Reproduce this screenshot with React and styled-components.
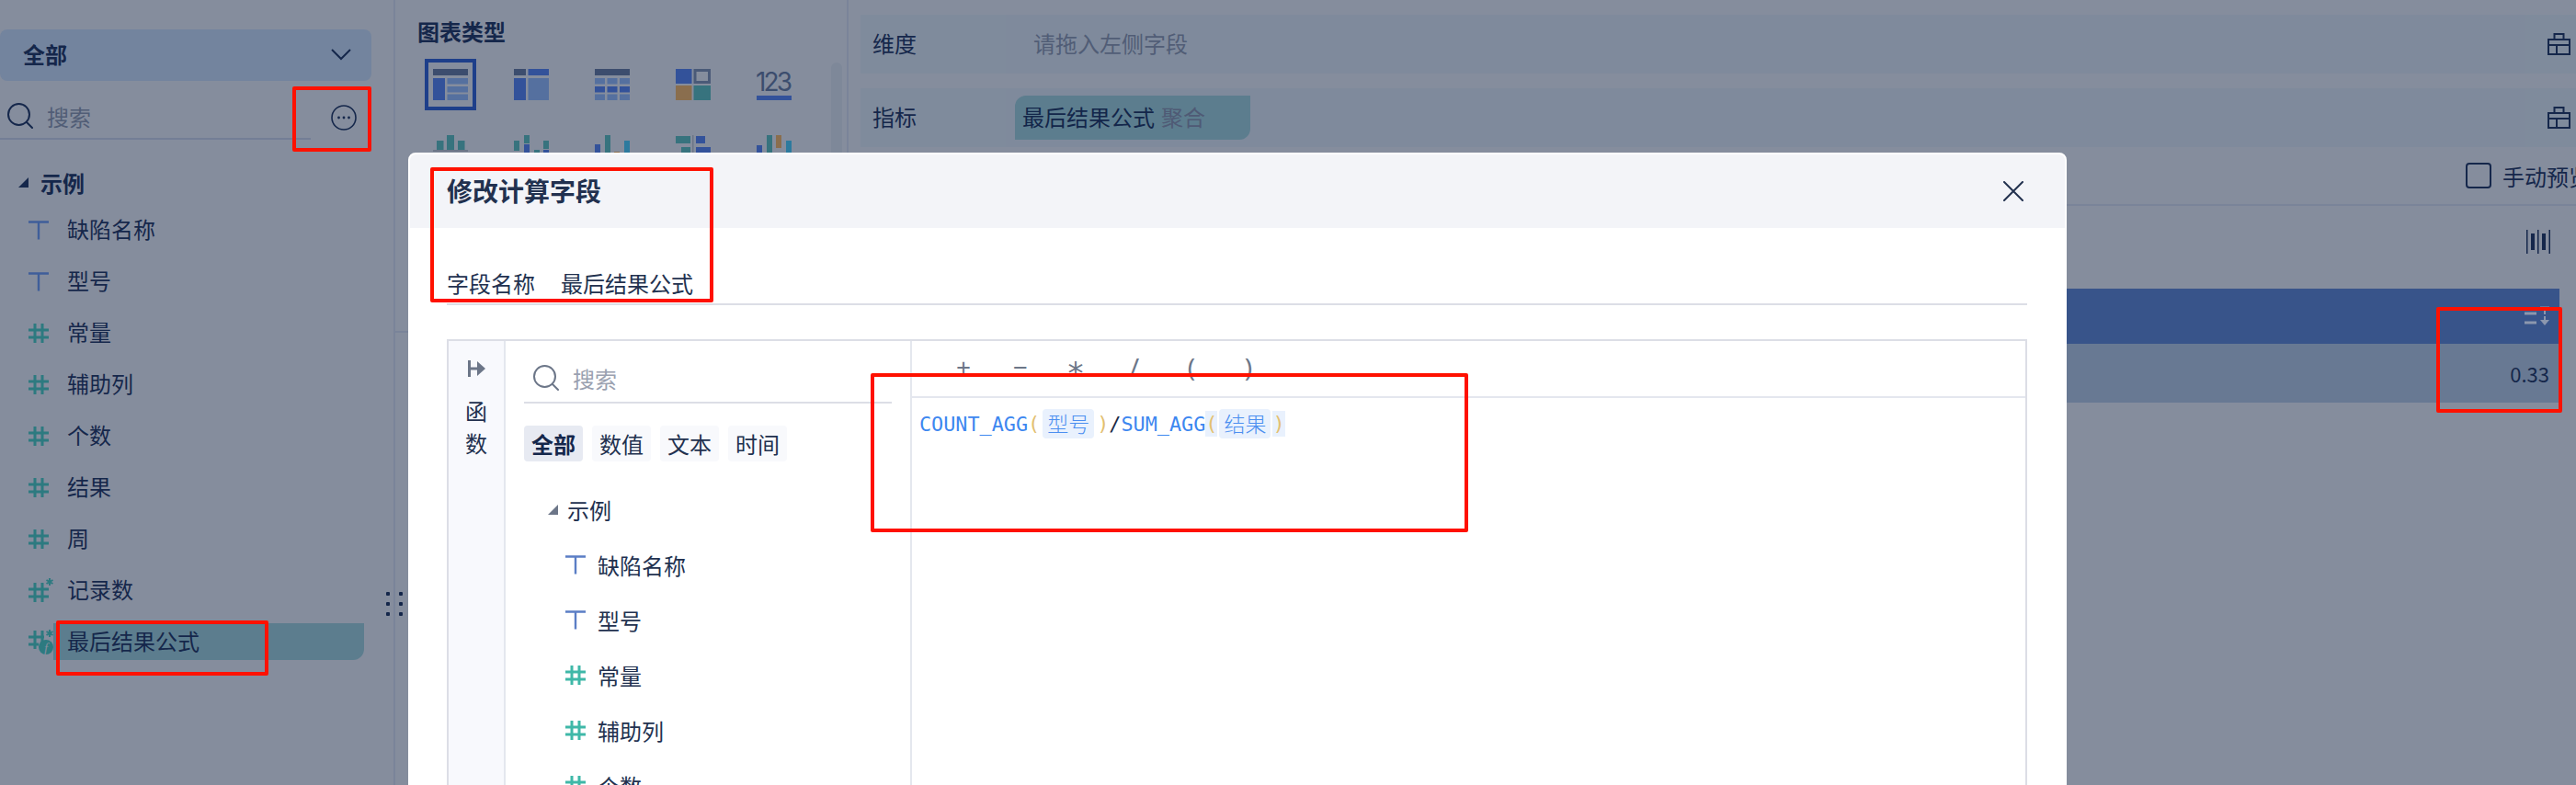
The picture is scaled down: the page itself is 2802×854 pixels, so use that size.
import React from 'react';
import styled, { createGlobalStyle } from 'styled-components';

const Global = createGlobalStyle`
  html, body { margin: 0; padding: 0; background: #858d9d; overflow: hidden; }
  * { box-sizing: border-box; }
  body { font-family: "Noto Sans CJK SC", "Noto Sans", sans-serif; color: #15274b; }
`;

const Page = styled.div`
  position: relative; width: 2802px; height: 854px; overflow: hidden;
  display: flex; background: #858d9d; font-size: 24px;
`;

/* left field panel */
const FieldPanel = styled.aside`
  position: relative; flex: 0 0 430px; height: 100%; padding-top: 32px;
  border-right: 2px solid #7a8499;
`;
const Scope = styled.div`
  width: 404px; height: 56px; background: #73849e; border-radius: 8px;
  display: flex; align-items: center; justify-content: space-between;
  padding: 0 22px 2px 25px; font-weight: 700; line-height: 1;
`;
const SearchRow = styled.div`
  display: flex; align-items: center; width: 404px; height: 64px; padding-top: 8px;
`;
const SearchField = styled.div`
  flex: 0 0 338px; height: 56px; border-bottom: 2px solid #737e96; padding: 6px 0 0 8px;
  display: flex; align-items: center; gap: 15px; color: #515d76;
`;
const MoreSlot = styled.div`
  flex: 1; display: flex; justify-content: flex-end; padding: 0 16px 0 0; margin-top: 8px;
`;
const GroupRow = styled.div`
  display: flex; align-items: center; height: 44px; margin-top: 26px; padding: 0 0 4px 20px;
  gap: 13px; font-weight: 700;
`;
const FieldRow = styled.div`
  display: flex; align-items: center; height: 56px; padding-left: 31px;
`;
const FieldIcon = styled.span`
  flex: 0 0 27px; display: flex; align-items: center;
`;
const FieldName = styled.span`
  flex: 0 0 338px; height: 40px; line-height: 37px; padding-left: 15px;
  border-radius: 0 0 12px 0;
  background: ${p => (p.$active ? '#5c7d8e' : 'transparent')};
`;
const Grip = styled.div`
  position: absolute; left: 420px; top: 644px; width: 18px; height: 26px;
  display: grid; grid-template-columns: 4px 4px; justify-content: space-between; align-content: space-between;
  & > i { width: 4px; height: 4px; background: #15274b; border-radius: 1px; }
`;

/* middle chart panel */
const ChartPanel = styled.section`
  position: relative; flex: 0 0 493px; height: 100%; border-right: 2px solid #7a8499;
`;
const ChartTop = styled.div`
  height: 362px; border-bottom: 2px solid #7a8499; padding: 16px 0 0 24px; overflow: hidden;
`;
const PanelTitle = styled.div`
  font-weight: 700; line-height: 36px; height: 48px;
`;
const ChartGrid = styled.div`
  display: grid; grid-template-columns: repeat(5, 56px); grid-auto-rows: 56px;
  column-gap: 32px; row-gap: 16px; margin-left: 8px;
`;
const ChartCell = styled.div`
  display: flex; align-items: center; justify-content: center;
  border: 4px solid ${p => (p.$active ? '#1e3f8a' : 'transparent')};
`;
const Scroll = styled.div`
  position: absolute; left: 474px; top: 68px; width: 12px; height: 130px;
  border-radius: 6px; background: #7e8899;
`;

/* right config panel */
const ConfigPanel = styled.section`
  flex: 1; min-width: 0; padding: 16px 0 0 13px; overflow: hidden;
`;
const ShelfRow = styled.div`
  display: flex; gap: 2px; height: 64px; margin-bottom: 16px; background: #7f8a9c;
`;
const ShelfLabel = styled.div`
  flex: 0 0 158px; display: flex; align-items: center; padding: 0 0 4px 13px; background: #7f8b9c;
`;
const ShelfDrop = styled.div`
  flex: 1; display: flex; align-items: center; background: #7f8a9c;
  padding: ${p => (p.$pill ? '0 0 0 8px' : '0 0 4px 28px')}; color: #515d76;
`;
const ShelfTool = styled.div`
  flex: 0 0 55px; display: flex; align-items: center; padding-left: 24px; background: #7f8b9c;
`;
const MeasurePill = styled.div`
  width: 256px; height: 48px; background: #5c7d8e; border-radius: 12px 0 12px 0;
  display: flex; align-items: center; gap: 7px; padding: 0 0 3px 8px; color: #13264a;
  & > em { font-style: normal; color: #4f5a75; }
`;
const PreviewBar = styled.div`
  display: flex; align-items: center; gap: 12px; height: 64px; margin-top: -16px;
  border-bottom: 2px solid #7a8499; padding-left: 1746px; white-space: nowrap;
`;
const CheckBox = styled.span`
  flex: 0 0 28px; height: 28px; border: 2px solid #15274b; border-radius: 4px;
`;
const ViewBar = styled.div`
  display: flex; justify-content: flex-end; padding: 26px 28px 0 0; height: 90px;
`;
const Table = styled.div`
  width: 1848px;
`;
const TableHead = styled.div`
  height: 60px; background: #38548a; display: flex; align-items: center; justify-content: flex-end;
  padding-right: 11px;
`;
const TableRow = styled.div`
  height: 64px; background: #687993; display: flex; align-items: center; justify-content: flex-end;
  padding-right: 11px; font-size: 22px;
`;

/* modal */
const Modal = styled.div`
  position: absolute; left: 444px; top: 166px; width: 1804px; height: 720px;
  border: 2px solid #fff; border-radius: 8px 8px 0 0; background: #fff; overflow: hidden;
`;
const ModalHead = styled.div`
  height: 80px; background: #f3f4f8; padding-left: 40px;
  display: flex; align-items: center; justify-content: space-between; padding-right: 45px;
`;
const ModalTitle = styled.div`
  font-size: 28px; font-weight: 700; color: #22314f; margin-bottom: 3px;
`;
const NameRow = styled.div`
  display: flex; align-items: flex-end; gap: 28px; height: 84px; margin: 0 41px 0 40px;
  border-bottom: 2px solid #dcdee6; padding-bottom: 5px; line-height: 34px; color: #22314f;
`;
const Editor = styled.div`
  display: flex; height: 600px; margin: 37px 41px 0 40px; border: 2px solid #dcdee6;
`;
const Rail = styled.div`
  flex: 0 0 62px; background: #f8f9fd; border-right: 2px solid #e4e7ee;
  display: flex; flex-direction: column; align-items: center; padding-top: 21px;
  line-height: 35px; color: #22314f;
  & > svg { margin: 0 0 19px 2px; }
`;
const ListPane = styled.div`
  flex: 0 0 442px; padding-left: 20px; border-right: 2px solid #e4e7ee;
`;
const ListSearch = styled.div`
  width: 400px; height: 68px; border-bottom: 2px solid #dcdee6; padding: 14px 0 0 10px;
  display: flex; align-items: center; gap: 15px; color: #9aa1b0;
`;
const Tabs = styled.div`
  display: flex; gap: 10px; margin-top: 24px;
`;
const Tab = styled.div`
  width: 64px; height: 39px; line-height: 39px; text-align: center; border-radius: 4px;
  background: ${p => (p.$active ? '#e7eaf2' : '#f8f9fc')};
  font-weight: ${p => (p.$active ? 700 : 400)};
  color: ${p => (p.$active ? '#15274b' : '#22314f')};
`;
const ListGroup = styled.div`
  display: flex; align-items: center; gap: 10px; height: 60px; margin-top: 22px; padding-left: 26px;
  color: #22314f;
`;
const ListItem = styled.div`
  display: flex; align-items: center; gap: 13px; height: 60px; padding-left: 45px; color: #22314f;
`;
const CodePane = styled.div`
  flex: 1; min-width: 0;
`;
const Operators = styled.div`
  display: flex; height: 62px; padding: 0 0 4px 25px; border-bottom: 2px solid #e4e7ee;
  align-items: center; color: #6c7688; font-size: 28px; font-family: "Noto Sans", sans-serif;
`;
const Operator = styled.span`
  flex: 0 0 62px; text-align: center; line-height: 1; height: 28px;
`;
const Asterisk = styled(Operator)`
  font-family: "DejaVu Sans Mono", monospace; font-size: 34px; transform: translate(-2px, 4px);
`;
const Formula = styled.div`
  display: flex; align-items: center; height: 32px; margin: 12px 0 0 8px;
  font-family: "DejaVu Sans Mono", "Noto Sans CJK SC", monospace; font-size: 21.8px; white-space: pre;
`;
const Fn = styled.span` color: #3d87f0; `;
const Slash = styled.span` color: #1b2a45; `;
const Paren = styled.span`
  color: #e3c070; height: 28px; line-height: 28px;
  background: ${p => (p.$hl ? '#e9f1fd' : 'transparent')};
`;
const Token = styled.span`
  width: 56px; height: 32px; margin: 0 ${p => (p.$tight ? '2px' : '3px')}; background: #e9f1fd; border-radius: 4px;
  color: #4c8ff0; text-align: center; line-height: 30px; font-size: 23px; font-weight: 300;
  font-family: "Noto Sans CJK SC", sans-serif;
`;

const Marker = styled.div`
  position: absolute; left: ${p => p.$x}px; top: ${p => p.$y}px; width: ${p => p.$w}px; height: ${p => p.$h}px;
  border: 4px solid #ff1100; border-radius: 2px; pointer-events: none;
`;

/* drawings */
const Search = ({ color = '#15274b' }) => (
  <svg width="28" height="28" viewBox="0 0 28 28" fill="none" stroke={color} strokeWidth="2">
    <circle cx="12.5" cy="12.5" r="11.5" /><path d="M21 21l6 6" strokeLinecap="round" />
  </svg>
);
const T = ({ color }) => (
  <svg width="22" height="21" viewBox="0 0 22 21" fill="none" stroke={color} strokeWidth="2.4">
    <path d="M0 1.5h22M11 1.5V20.5" />
  </svg>
);
const Hash = ({ color }) => (
  <svg width="22" height="21" viewBox="0 0 22 21" fill="none" stroke={color} strokeWidth="3">
    <path d="M7 0v21M15 0v21M0 7h22M0 15h22" />
  </svg>
);
const HashStar = () => (
  <svg width="27" height="26" viewBox="0 0 27 26" fill="none" stroke="#2d7a80">
    <path d="M7 5v21M15 5v21M0 12h22M0 20h22" strokeWidth="3" />
    <path d="M23 0v8M19.5 2l7 4M26.5 2l-7 4" strokeWidth="2" />
  </svg>
);
const HashFormula = () => (
  <svg width="27" height="27" viewBox="0 0 27 27" fill="none" stroke="#2d7a80">
    <path d="M7 1v20M15 1v20M0 8h17M0 16h11" strokeWidth="3" />
    <path d="M23 0v8M19.5 2l7 4M26.5 2l-7 4" strokeWidth="2" />
    <circle cx="19" cy="19" r="8" fill="#2d7a80" stroke="none" />
    <text x="19" y="25" textAnchor="middle" fontSize="15" fontStyle="italic" fontFamily="Liberation Serif" fill="#858d9d" stroke="none">f</text>
  </svg>
);
const Brush = () => (
  <svg width="25" height="24" viewBox="0 0 25 24" fill="none" stroke="#15274b" strokeWidth="2">
    <path d="M7.5 7V1h10v6M1 7h23v16H1zM1 13h23M10 13v10" />
  </svg>
);
const ChevronDown = () => (
  <svg width="22" height="13" viewBox="0 0 22 13" fill="none" stroke="#15274b" strokeWidth="2"><path d="M1 1l10 10L21 1" /></svg>
);
const More = () => (
  <svg width="28" height="28" viewBox="0 0 28 28" fill="none" stroke="#15274b" strokeWidth="1.6">
    <circle cx="14" cy="14" r="13" />
    <g fill="#15274b" stroke="none"><circle cx="8.5" cy="14" r="1.4" /><circle cx="14" cy="14" r="1.4" /><circle cx="19.5" cy="14" r="1.4" /></g>
  </svg>
);
const Corner = ({ color }) => (
  <svg width="11" height="11" viewBox="0 0 11 11"><path d="M11 0v11H0z" fill={color} /></svg>
);
const Close = () => (
  <svg width="22" height="22" viewBox="0 0 22 22" fill="none" stroke="#22314f" strokeWidth="2" strokeLinecap="round"><path d="M1 1l20 20M21 1L1 21" /></svg>
);
const Collapse = () => (
  <svg width="20" height="18" viewBox="0 0 20 18"><path d="M0 0h3v18H0zM3 7.5h7v3H3z" fill="#6c7688" /><path d="M10 1l9 8-9 8z" fill="#6c7688" /></svg>
);
const BarsTool = () => (
  <svg width="26" height="26" viewBox="0 0 26 26" fill="#15274b">
    <rect x="0" y="0" width="1.5" height="26" /><rect x="5" y="4" width="4" height="18" /><rect x="12" y="0" width="1.5" height="26" />
    <rect x="17" y="4" width="4" height="18" /><rect x="24.5" y="0" width="1.5" height="26" />
  </svg>
);
const Sort = () => (
  <svg width="27" height="22" viewBox="0 0 27 22" fill="none" stroke="#8c97ae" strokeWidth="3">
    <path d="M0 8h13M0 18h13" />
    <path d="M17 1.5h10" strokeWidth="2" /><path d="M22 1v8" strokeWidth="2" /><path d="M22 11v7" strokeWidth="2" />
    <path d="M17 15h10l-5 6z" fill="#8c97ae" stroke="none" />
  </svg>
);

const dk = '#3c4d6e', bl = '#33529a', lt = '#55709f', te = '#37737e', br = '#8a6e4e', cy = '#2d7a9e';
const R = ({ x, y, w, h, f }) => <rect x={x} y={y} width={w} height={h} fill={f} />;
const Chart = ({ children }) => <svg width="38" height="34" viewBox="0 0 38 34">{children}</svg>;
const charts = [
  <Chart><R x={0} y={0} w={38} h={7} f={dk} /><R x={0} y={10} w={13} h={24} f={bl} /><R x={15.5} y={10} w={22.5} h={6.5} f={lt} /><R x={15.5} y={19} w={22.5} h={6.5} f={lt} /><R x={15.5} y={27.5} w={22.5} h={6.5} f={lt} /></Chart>,
  <Chart><R x={0} y={0} w={13} h={7} f={dk} /><R x={15.5} y={0} w={22.5} h={7} f={bl} /><R x={0} y={10} w={13} h={24} f={bl} /><R x={15.5} y={10} w={22.5} h={24} f={lt} /></Chart>,
  <Chart><R x={0} y={0} w={38} h={7} f={dk} />{[0, 13.5, 27].map(x => <React.Fragment key={x}><R x={x} y={10} w={11} h={6.5} f={lt} /><R x={x} y={19} w={11} h={6.5} f={bl} /><R x={x} y={27.5} w={11} h={6.5} f={lt} /></React.Fragment>)}</Chart>,
  <Chart><R x={0} y={0} w={17.5} h={16} f={bl} /><rect x={21} y={1.5} width={15.5} height={13} fill="none" stroke="#4a5a78" strokeWidth="3" /><R x={0} y={18} w={17.5} h={16} f={br} /><R x={19.5} y={18} w={18.5} h={16} f={te} /></Chart>,
  <Chart><text x="-1" y="24" fontSize="28" fontFamily="Inter" fill={dk} textLength="40">123</text><R x={0} y={29} w={38} h={5} f={bl} /></Chart>,
  <Chart><R x={4} y={6} w={7.5} h={11} f={te} /><R x={15} y={0} w={8} h={17} f={te} /><R x={27} y={6} w={7.5} h={11} f={te} /><R x={0} y={16} w={38} h={2} f="#6c7688" /></Chart>,
  <Chart><R x={0} y={6} w={6} h={11} f={te} /><R x={11} y={0} w={6} h={9} f={te} /><R x={11} y={10} w={6} h={10} f={bl} /><R x={22} y={16} w={6} h={4} f={te} /><R x={32} y={6} w={6} h={9} f={te} /><R x={32} y={16} w={6} h={4} f={bl} /></Chart>,
  <Chart><R x={0} y={10} w={6} h={10} f={bl} /><R x={11} y={0} w={6} h={20} f={te} /><R x={21} y={18} w={6} h={2} f={br} /><R x={32} y={6} w={6} h={14} f={cy} /></Chart>,
  <Chart><R x={0} y={1} w={16} h={8} f={te} /><R x={22} y={1} w={10} h={8} f={bl} /><R x={6} y={13} w={10} h={8} f={te} /><R x={22} y={13} w={16} h={8} f={bl} /><R x={18} y={0} w={1.5} h={24} f="#6c7688" /></Chart>,
  <Chart><R x={0} y={11} w={6} h={10} f={bl} /><R x={11} y={0} w={6} h={20} f={te} /><R x={21} y={0} w={6} h={14} f={br} /><R x={32} y={6} w={6} h={14} f={cy} /></Chart>,
];

const fields = [
  ['缺陷名称', 't'], ['型号', 't'], ['常量', 'h'], ['辅助列', 'h'], ['个数', 'h'], ['结果', 'h'], ['周', 'h'],
  ['记录数', 's'], ['最后结果公式', 'f'],
];
const fieldGlyph = kind => {
  if (kind === 't') return <T color="#3f5e9a" />;
  if (kind === 'h') return <Hash color="#2d7a80" />;
  if (kind === 's') return <HashStar />;
  return <HashFormula />;
};

export default function App() {
  return (
    <Page>
      <Global />
      <FieldPanel>
        <Scope>全部<ChevronDown /></Scope>
        <SearchRow>
          <SearchField><Search />搜索</SearchField>
          <MoreSlot><More /></MoreSlot>
        </SearchRow>
        <GroupRow><Corner color="#15274b" />示例</GroupRow>
        {fields.map(([name, kind]) => (
          <FieldRow key={name}>
            <FieldIcon>{fieldGlyph(kind)}</FieldIcon>
            <FieldName $active={kind === 'f'}>{name}</FieldName>
          </FieldRow>
        ))}
        <Grip>{[0, 1, 2, 3, 4, 5].map(i => <i key={i} />)}</Grip>
      </FieldPanel>

      <ChartPanel>
        <ChartTop>
          <PanelTitle>图表类型</PanelTitle>
          <ChartGrid>
            {charts.map((c, i) => <ChartCell key={i} $active={i === 0}>{c}</ChartCell>)}
          </ChartGrid>
        </ChartTop>
        <Scroll />
      </ChartPanel>

      <ConfigPanel>
        <ShelfRow>
          <ShelfLabel>维度</ShelfLabel>
          <ShelfDrop>请拖入左侧字段</ShelfDrop>
          <ShelfTool><Brush /></ShelfTool>
        </ShelfRow>
        <ShelfRow>
          <ShelfLabel>指标</ShelfLabel>
          <ShelfDrop $pill><MeasurePill>最后结果公式<em>聚合</em></MeasurePill></ShelfDrop>
          <ShelfTool><Brush /></ShelfTool>
        </ShelfRow>
        <PreviewBar><CheckBox />手动预览</PreviewBar>
        <ViewBar><BarsTool /></ViewBar>
        <Table>
          <TableHead><Sort /></TableHead>
          <TableRow>0.33</TableRow>
        </Table>
      </ConfigPanel>

      <Modal>
        <ModalHead>
          <ModalTitle>修改计算字段</ModalTitle>
          <Close />
        </ModalHead>
        <NameRow><span>字段名称</span><span>最后结果公式</span></NameRow>
        <Editor>
          <Rail><Collapse /><span>函</span><span>数</span></Rail>
          <ListPane>
            <ListSearch><Search color="#6c7688" />搜索</ListSearch>
            <Tabs>
              <Tab $active>全部</Tab><Tab>数值</Tab><Tab>文本</Tab><Tab>时间</Tab>
            </Tabs>
            <ListGroup><Corner color="#6c7688" />示例</ListGroup>
            {fields.slice(0, 5).map(([name, kind]) => (
              <ListItem key={name}>
                {kind === 't' ? <T color="#5b7ec5" /> : <Hash color="#3fb8a8" />}
                {name}
              </ListItem>
            ))}
          </ListPane>
          <CodePane>
            <Operators>
              <Operator>+</Operator><Operator>−</Operator><Asterisk>*</Asterisk>
              <Operator>/</Operator><Operator>(</Operator><Operator>)</Operator>
            </Operators>
            <Formula>
              <Fn>COUNT_AGG</Fn><Paren>(</Paren><Token>型号</Token><Paren>)</Paren><Slash>/</Slash>
              <Fn>SUM_AGG</Fn><Paren $hl>(</Paren><Token $tight>结果</Token><Paren $hl>)</Paren>
            </Formula>
          </CodePane>
        </Editor>
      </Modal>

      <Marker $x={318} $y={94} $w={86} $h={71} />
      <Marker $x={61} $y={675} $w={231} $h={60} />
      <Marker $x={468} $y={182} $w={308} $h={147} />
      <Marker $x={947} $y={406} $w={650} $h={173} />
      <Marker $x={2650} $y={334} $w={137} $h={115} />
    </Page>
  );
}
